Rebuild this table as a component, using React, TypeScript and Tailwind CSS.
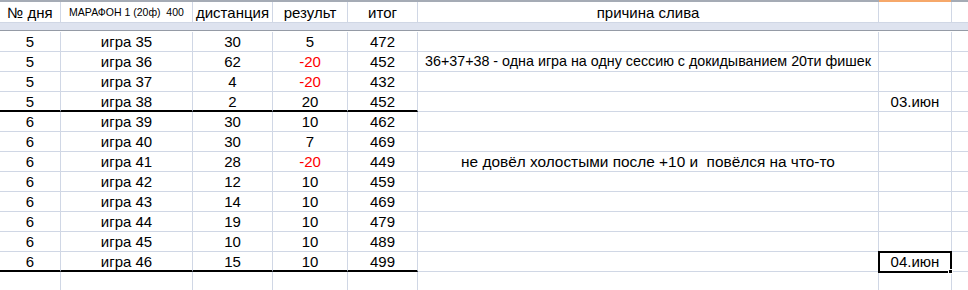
import React from "react"

type Row = {
  day: number
  game: string
  dist: number
  res: number
  total: number
  note?: string
  noteSize?: string
  date?: string
  thick?: boolean
}

const rows: Row[] = [
  { day: 5, game: "игра 35", dist: 30, res: 5, total: 472 },
  { day: 5, game: "игра 36", dist: 62, res: -20, total: 452, note: "36+37+38 - одна игра на одну сессию с докидыванием 20ти фишек", noteSize: "text-[14.3px]" },
  { day: 5, game: "игра 37", dist: 4, res: -20, total: 432 },
  { day: 5, game: "игра 38", dist: 2, res: 20, total: 452, date: "03.июн", thick: true },
  { day: 6, game: "игра 39", dist: 30, res: 10, total: 462 },
  { day: 6, game: "игра 40", dist: 30, res: 7, total: 469 },
  { day: 6, game: "игра 41", dist: 28, res: -20, total: 449, note: "не довёл холостыми после +10 и  повёлся на что-то", noteSize: "text-[15.4px]" },
  { day: 6, game: "игра 42", dist: 12, res: 10, total: 459 },
  { day: 6, game: "игра 43", dist: 14, res: 10, total: 469 },
  { day: 6, game: "игра 44", dist: 19, res: 10, total: 479 },
  { day: 6, game: "игра 45", dist: 10, res: 10, total: 489 },
  { day: 6, game: "игра 46", dist: 15, res: 10, total: 499, date: "04.июн", thick: true },
]

const cell = "flex items-center justify-center border-r border-[#d0d7e5] whitespace-pre"

export default function App() {
  return (
    <div className="w-[968px] h-[290px] overflow-hidden bg-white text-black text-[15px] leading-none font-['Liberation_Sans',Arial,sans-serif]">
      {/* header */}
      <div className="flex h-[23px] border-t-2 border-[#a5abb5]">
        <div className={`${cell} w-[61px] border-b border-b-[#d0d7e5]`}>№ дня</div>
        <div className={`${cell} w-[132px] border-b border-b-[#d0d7e5] text-[10.5px]`}>МАРАФОН 1 (20ф)  400</div>
        <div className={`${cell} w-[80px] border-b border-b-[#d0d7e5]`}>дистанция</div>
        <div className={`${cell} w-[75px] border-b border-b-[#d0d7e5]`}>результ</div>
        <div className={`${cell} w-[70px] border-b border-b-[#d0d7e5]`}>итог</div>
        <div className={`${cell} w-[461px] border-b border-b-[#d0d7e5]`}>причина слива</div>
        <div className={`${cell} w-[73px] border-b border-b-[#d0d7e5] relative`}>
          <div className="absolute -top-[2px] left-0 right-0 h-[2px] bg-[#f6a86a]" />
        </div>
        <div className="flex-1 border-b border-[#d0d7e5]" />
      </div>
      {/* frozen pane split */}
      <div className="h-[7px] bg-[#dee3ef]" />
      <div className="h-[2px] bg-[#959ba6] border-b border-white" />

      {rows.map((r, i) => {
        const b = r.thick ? "border-b-2 border-b-black" : "border-b border-b-[#d0d7e5]"
        return (
          <div key={i} className="flex h-[20px]">
            <div className={`${cell} w-[61px] ${b}`}>{r.day}</div>
            <div className={`${cell} w-[132px] ${b}`}>{r.game}</div>
            <div className={`${cell} w-[80px] ${b}`}>{r.dist}</div>
            <div className={`${cell} w-[75px] ${b} ${r.res < 0 ? "text-[#ff0000]" : ""}`}>{r.res}</div>
            <div className={`${cell} w-[70px] ${b}`}>{r.total}</div>
            <div className={`${cell} w-[461px] border-b border-b-[#d0d7e5] ${r.noteSize ?? ""}`}>{r.note ?? ""}</div>
            <div className={`${cell} w-[73px] border-b border-b-[#d0d7e5] relative`}>
              {r.date ?? ""}
              {i === rows.length - 1 && (
                <div className="absolute -left-[1px] -top-[1px] w-[74px] h-[22px] border-2 border-black">
                  <div className="absolute -right-[3px] -bottom-[3px] w-[5px] h-[5px] bg-black border border-white" />
                </div>
              )}
            </div>
            <div className="flex-1 border-b border-[#d0d7e5]" />
          </div>
        )
      })}

      {/* empty row below */}
      <div className="flex h-[20px]">
        <div className={`${cell} w-[61px] border-b border-b-[#d0d7e5]`} />
        <div className={`${cell} w-[132px] border-b border-b-[#d0d7e5]`} />
        <div className={`${cell} w-[80px] border-b border-b-[#d0d7e5]`} />
        <div className={`${cell} w-[75px] border-b border-b-[#d0d7e5]`} />
        <div className={`${cell} w-[70px] border-b border-b-[#d0d7e5]`} />
        <div className={`${cell} w-[461px] border-b border-b-[#d0d7e5]`} />
        <div className={`${cell} w-[73px] border-b border-b-[#d0d7e5]`} />
        <div className="flex-1 border-b border-[#d0d7e5]" />
      </div>
    </div>
  )
}
